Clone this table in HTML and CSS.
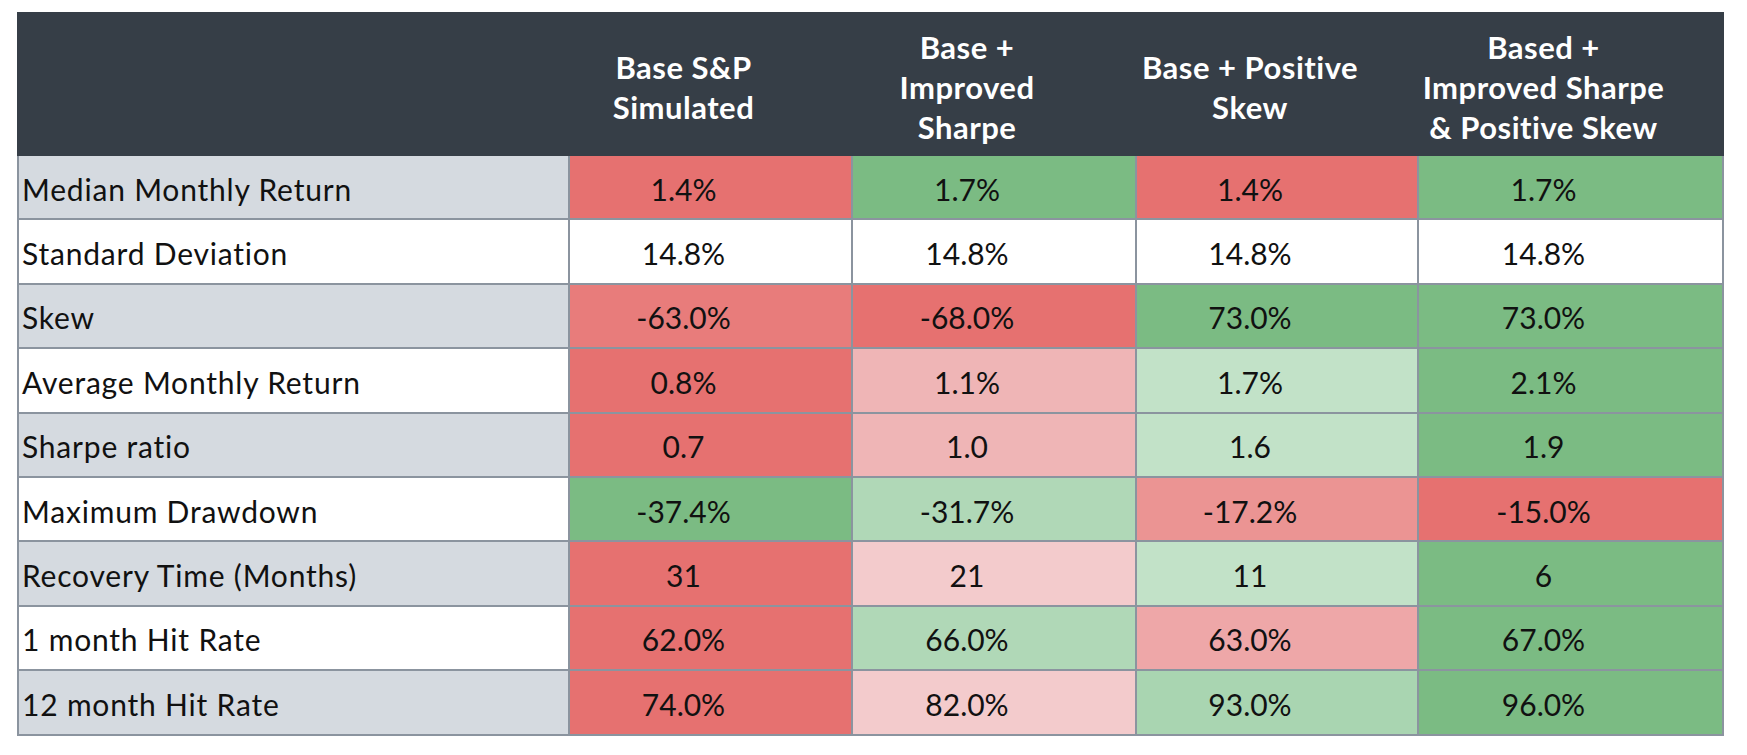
FILE: index.html
```html
<!DOCTYPE html>
<html lang="en">
<head>
<meta charset="utf-8">
<title>Strategy comparison</title>
<link rel="stylesheet" href="styles.css">
</head>
<body>
<div class="sheet">
  <div class="head">
    <div class="hcell"></div>
    <div class="hcell">Base S&amp;P<br>Simulated</div>
    <div class="hcell">Base +<br>Improved<br>Sharpe</div>
    <div class="hcell">Base + Positive<br>Skew</div>
    <div class="hcell">Based +<br>Improved Sharpe<br>&amp; Positive Skew</div>
  </div>
  <div class="body">
    <div class="label shade">Median Monthly Return</div>
    <div class="val red">1.4%</div><div class="val green">1.7%</div><div class="val red">1.4%</div><div class="val green">1.7%</div>

    <div class="label">Standard Deviation</div>
    <div class="val">14.8%</div><div class="val">14.8%</div><div class="val">14.8%</div><div class="val">14.8%</div>

    <div class="label shade">Skew</div>
    <div class="val red2">-63.0%</div><div class="val red">-68.0%</div><div class="val green">73.0%</div><div class="val green">73.0%</div>

    <div class="label">Average Monthly Return</div>
    <div class="val red">0.8%</div><div class="val pink">1.1%</div><div class="val mint">1.7%</div><div class="val green">2.1%</div>

    <div class="label shade">Sharpe ratio</div>
    <div class="val red">0.7</div><div class="val pink">1.0</div><div class="val mint">1.6</div><div class="val green">1.9</div>

    <div class="label">Maximum Drawdown</div>
    <div class="val green">-37.4%</div><div class="val mint2">-31.7%</div><div class="val rose">-17.2%</div><div class="val red">-15.0%</div>

    <div class="label shade">Recovery Time (Months)</div>
    <div class="val red">31</div><div class="val blush">21</div><div class="val mint">11</div><div class="val green">6</div>

    <div class="label">1 month Hit Rate</div>
    <div class="val red">62.0%</div><div class="val mint2">66.0%</div><div class="val pink2">63.0%</div><div class="val green">67.0%</div>

    <div class="label shade">12 month Hit Rate</div>
    <div class="val red">74.0%</div><div class="val blush">82.0%</div><div class="val mint3">93.0%</div><div class="val green">96.0%</div>
  </div>
</div>
</body>
</html>
```

FILE: styles.css
```css
html, body {
  margin: 0;
  padding: 0;
  background: #ffffff;
}

body {
  font-family: Lato, "Liberation Sans", sans-serif;
  color: #111111;
}

.sheet {
  margin: 12px 0 0 17px;
  width: 1707px;
}

.head,
.body {
  display: grid;
  grid-template-columns: 549px 281px 282px 280px 303px;
  column-gap: 2px;
  padding: 0 2px;
}

.head {
  background: #363e47;
  height: 144px;
}

.hcell {
  display: flex;
  align-items: center;
  justify-content: center;
  text-align: center;
  color: #ffffff;
  font-weight: 700;
  font-size: 31px;
  letter-spacing: 0.5px;
  line-height: 40px;
  padding-top: 6px;
  padding-right: 54px;
}

.body {
  background: #8b949f;
  row-gap: 2px;
  padding-bottom: 2px;
  grid-auto-rows: 62.4px;
}

.label,
.val {
  display: flex;
  align-items: center;
  font-size: 30px;
  padding-top: 3px;
  background: #ffffff;
}

.label {
  padding-left: 3px;
  letter-spacing: 0.8px;
}

.label.shade {
  background: #d5dae0;
}

.val {
  justify-content: center;
  padding-right: 54px;
}

.red   { background: #e67170; }
.red2  { background: #e87c7b; }
.rose  { background: #eb9493; }
.pink  { background: #efb5b6; }
.pink2 { background: #eea7a8; }
.blush { background: #f3cbcc; }
.green { background: #7bbb83; }
.mint  { background: #c2e2c8; }
.mint2 { background: #b0d8b7; }
.mint3 { background: #a9d5b1; }
```
